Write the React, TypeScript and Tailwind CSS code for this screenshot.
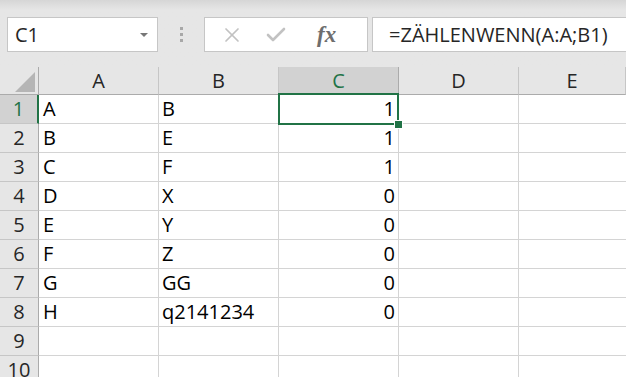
import { X, Check } from 'lucide-react'

const rows: [string, string, string][] = [
  ['A', 'B', '1'],
  ['B', 'E', '1'],
  ['C', 'F', '1'],
  ['D', 'X', '0'],
  ['E', 'Y', '0'],
  ['F', 'Z', '0'],
  ['G', 'GG', '0'],
  ['H', 'q2141234', '0'],
  ['', '', ''],
  ['', '', ''],
]

const cols = ['A', 'B', 'C', 'D', 'E']

export default function App() {
  return (
    <div
      className="w-[626px] h-[377px] overflow-hidden bg-[#e6e6e6] text-[#1f1f1f]"
      style={{ fontFamily: '"Open Sans", "Noto Sans", sans-serif' }}
    >
      {/* toolbar */}
      <div className="h-[67px] bg-gradient-to-b from-[#d6d6d6] to-[#e6e6e6] to-[10px] pt-[17px]">
        <div className="flex h-[35px]">
          <div className="ml-[7px] w-[151px] bg-white border border-[#c6c6c6] flex items-center pl-[7px] pr-[9px]">
            <span className="flex-1 text-[20px] leading-none text-[#262626]">C1</span>
            <div className="w-0 h-0 border-l-[4px] border-r-[4px] border-t-[4px] border-l-transparent border-r-transparent border-t-[#777]" />
          </div>
          <div className="w-[46px] flex flex-col items-center justify-center gap-[3px]">
            <div className="w-[3px] h-[3px] bg-[#a8a8a8]" />
            <div className="w-[3px] h-[3px] bg-[#a8a8a8]" />
            <div className="w-[3px] h-[3px] bg-[#a8a8a8]" />
          </div>
          <div className="w-[164px] bg-white border border-[#c6c6c6] flex items-center">
            <X size={24} strokeWidth={1.7} className="ml-[15px] text-[#c2c2c2]" />
            <Check size={24} strokeWidth={2.6} className="ml-[20px] text-[#c2c2c2]" />
            <span
              className="ml-[29px] text-[23px] italic font-bold text-[#6e6e6e] leading-none"
              style={{ fontFamily: '"Liberation Serif", "DejaVu Serif", serif' }}
            >
              fx
            </span>
          </div>
          <div className="ml-[4px] flex-1 bg-white border border-[#c6c6c6] border-r-0 flex items-center pl-[16px]">
            <span className="text-[20px] leading-none text-[#262626]">=ZÄHLENWENN(A:A;B1)</span>
          </div>
        </div>
      </div>

      {/* sheet */}
      <div className="grid grid-cols-[39px_120px_120px_120px_120px_1fr] auto-rows-[29px] grid-rows-[28px]">
        <div className="relative border-r border-b border-[#ababab] bg-[#e6e6e6]">
          <div
            className="absolute left-[15px] top-[5px] w-[20px] h-[20px] bg-[#b5b5b5]"
            style={{ clipPath: 'polygon(100% 0, 100% 100%, 0 100%)' }}
          />
        </div>
        {cols.map((c) => (
          <div
            key={c}
            className={
              c === 'C'
                ? 'flex items-center justify-center bg-[#d2d2d2] border-r border-[#ababab] border-b-2 border-b-[#217346] text-[#217346] text-[20px] pt-[2px]'
                : 'flex items-center justify-center border-r border-[#c6c6c6] border-b border-b-[#ababab] text-[#262626] text-[20px]'
            }
          >
            {c}
          </div>
        ))}

        {rows.map((r, i) => (
          <Row key={i} n={i + 1} data={r} />
        ))}
      </div>
    </div>
  )
}

function Row({ n, data }: { n: number; data: [string, string, string] }) {
  const sel = n === 1
  return (
    <>
      <div
        className={
          sel
            ? 'flex items-end justify-center pb-[2px] bg-[#d2d2d2] border-b border-[#c6c6c6] border-r-2 border-r-[#217346] text-[#217346] text-[20px] leading-[24px]'
            : 'flex items-end justify-center pb-[2px] bg-[#e6e6e6] border-b border-[#c6c6c6] border-r border-r-[#ababab] text-[#262626] text-[20px] leading-[24px]'
        }
      >
        {n}
      </div>
      <div className="bg-white border-r border-b border-[#d4d4d4] flex items-end pl-[4px] pb-[2px] text-[20px] leading-[24px] text-black">
        {data[0]}
      </div>
      <div className="bg-white border-r border-b border-[#d4d4d4] flex items-end pl-[3px] pb-[2px] text-[20px] leading-[24px] text-black">
        {data[1]}
      </div>
      <div className={`relative bg-white border-r border-b border-[#d4d4d4] flex items-end justify-end pr-[3px] pb-[2px] text-[20px] leading-[24px] text-black ${sel ? 'z-10' : ''}`}>
        {data[2]}
        {sel && (
          <>
            <div className="absolute -left-[1px] -top-[2px] -right-[1px] -bottom-[2px] border-2 border-[#217346]" />
            <div className="absolute -right-[5px] -bottom-[6px] w-[9px] h-[9px] bg-[#217346] border border-white" />
          </>
        )}
      </div>
      <div className="bg-white border-r border-b border-[#d4d4d4]" />
      <div className="bg-white border-b border-[#d4d4d4]" />
    </>
  )
}
